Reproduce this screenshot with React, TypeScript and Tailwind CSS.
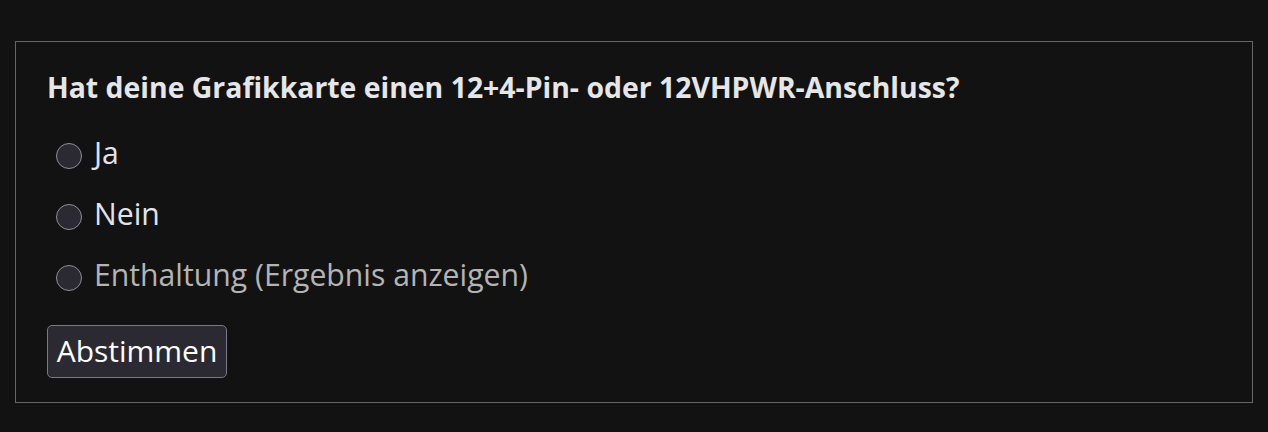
import React from "react";

const options = [
  { id: "ja", label: "Ja", muted: false },
  { id: "nein", label: "Nein", muted: false },
  { id: "enthaltung", label: "Enthaltung (Ergebnis anzeigen)", muted: true },
];

export default function App() {
  return (
    <div
      className="min-h-[432px] w-full bg-[#121212] pt-[41px] px-[15px]"
      style={{ fontFamily: '"Open Sans", "Noto Sans", sans-serif' }}
    >
      <form className="border border-[#666666] px-[31px] pt-[27px] pb-[24px]">
        <h2 className="text-[28.4px] leading-[36px] font-bold text-[#e6e6e6]">
          Hat deine Grafikkarte einen 12+4-Pin- oder 12VHPWR-Anschluss?
        </h2>

        <div className="mt-[20px] flex flex-col">
          {options.map((o) => (
            <label key={o.id} className="flex h-[61px] items-center pl-[9px]">
              <span className="h-[26px] w-[26px] shrink-0 rounded-full border border-[#8f8f9d] bg-[#2b2a33]" />
              <span
                className={
                  "ml-[12px] pb-[4px] text-[30.2px] leading-none " +
                  (o.muted ? "text-[#b4b4b4]" : "text-[#e0e4ea]")
                }
              >
                {o.label}
              </span>
            </label>
          ))}
        </div>

        <button
          type="button"
          className="mt-[17px] flex h-[53px] w-[180px] items-center justify-center rounded-[5px] border border-[#7a7a85] bg-[#2b2a33] pb-[2px] text-[30px] leading-none text-white"
        >
          Abstimmen
        </button>
      </form>
    </div>
  );
}
